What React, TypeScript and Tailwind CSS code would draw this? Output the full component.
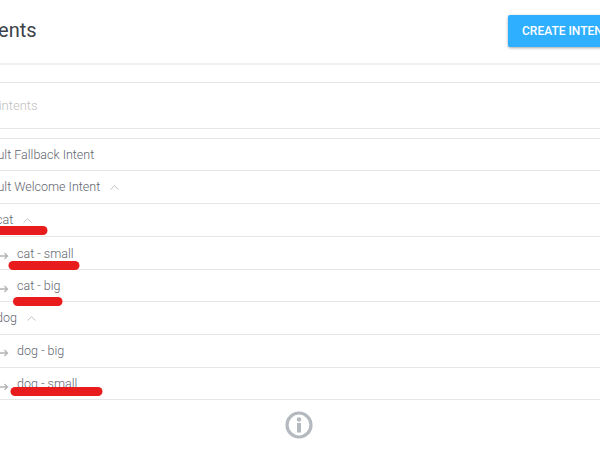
import React from "react";
import { ChevronUp } from "lucide-react";

const font = { fontFamily: "Roboto, sans-serif" };

function Arrow() {
  return (
    <svg width="10" height="10" viewBox="0 0 10 10" className="mt-[4px] shrink-0 text-[#b4b4b4]" fill="none" stroke="currentColor" strokeWidth="1.3">
      <path d="M-1 5h8.5M4.5 2l3 3-3 3" />
    </svg>
  );
}

function Row({ h, children }: { h: string; children: React.ReactNode }) {
  return (
    <div className={`flex items-center border-b border-[#e6e6e6] text-[12.5px] font-light text-[#5f6670] ${h}`}>
      {children}
    </div>
  );
}

function Chev() {
  return <ChevronUp size={15} strokeWidth={1.3} className="ml-[7px] text-[#b0b4b8]" />;
}

export default function App() {
  return (
    <div className="relative h-[450px] w-[600px] overflow-hidden bg-white" style={font}>
      <div className="flex h-[65px] items-start border-b-2 border-[#f0f0f0]">
        <div className="ml-[-25px] mt-[16px] w-[533px] shrink-0 text-[20px] leading-[28px] text-[#3c4248]">Intents</div>
        <button className="mt-[15px] h-[32px] w-[140px] shrink-0 whitespace-nowrap rounded-[2px] bg-[#2fafff] pl-[14px] text-left text-[12px] font-medium text-white shadow-[0_1px_3px_rgba(0,0,0,0.35)]">
          CREATE INTENT
        </button>
      </div>
      <div className="h-[18px] border-b border-[#e6e6e6]" />
      <div className="flex h-[46px] items-center border-b border-[#e6e6e6]">
        <span className="ml-[-44px] text-[13px] font-light text-[#c0c0c0]">Search intents</span>
      </div>
      <div className="h-[10px] border-b border-[#e6e6e6]" />
      <Row h="h-[32px] pt-[2px]"><span className="ml-[-28px]">Default Fallback Intent</span></Row>
      <Row h="h-[33px]"><span className="ml-[-28px]">Default Welcome Intent</span><Chev /></Row>
      <Row h="h-[33px]"><span className="ml-[-4px]">cat</span><Chev /></Row>
      <Row h="h-[33px] pt-[2px]"><Arrow /><span className="ml-[7px]">cat - small</span></Row>
      <Row h="h-[32px] pt-[2px]"><Arrow /><span className="ml-[7px]">cat - big</span></Row>
      <Row h="h-[33px]"><span className="ml-[-4px]">dog</span><Chev /></Row>
      <Row h="h-[33px]"><Arrow /><span className="ml-[7px]">dog - big</span></Row>
      <Row h="h-[32px] pt-[2px]"><Arrow /><span className="ml-[7px]">dog - small</span></Row>
      <div className="flex justify-center pt-[11px]">
        <svg width="28" height="28" viewBox="0 0 28 28" fill="none" className="ml-[-2px]">
          <circle cx="14" cy="14" r="12" stroke="#b4b9c0" strokeWidth="3.2" />
          <circle cx="14" cy="8.5" r="2.2" fill="#b4b9c0" />
          <rect x="12" y="12" width="4" height="9.5" fill="#b4b9c0" />
        </svg>
      </div>
      <svg className="pointer-events-none absolute left-0 top-0" width="600" height="450" fill="none" stroke="#e81c1c" strokeLinecap="round" strokeWidth="9">
        <path d="M-4 230.5H43" />
        <path d="M13 265.5H75" />
        <path d="M17.5 301.5H58" />
        <path d="M15 391.5H98" />
      </svg>
    </div>
  );
}
